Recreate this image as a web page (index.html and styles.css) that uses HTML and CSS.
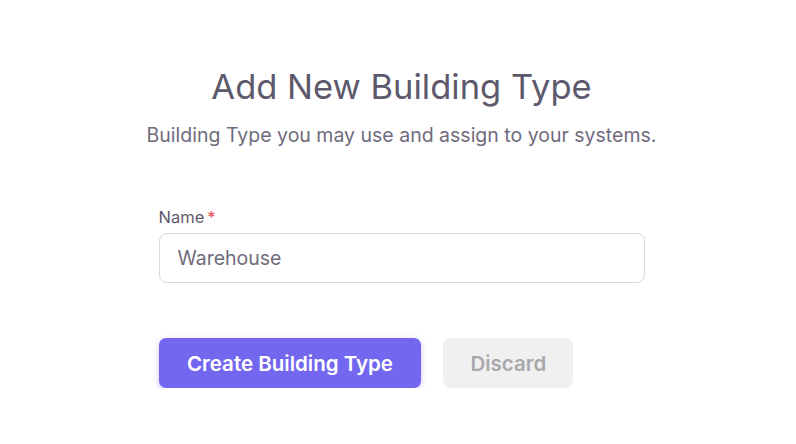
FILE: index.html
```html
<!DOCTYPE html>
<html lang="en">
<head>
<meta charset="UTF-8" />
<meta name="viewport" content="width=device-width, initial-scale=1" />
<title>Add New Building Type</title>
<link rel="stylesheet" href="styles.css">
</head>
<body>

<div class="page">
  <div class="header">
    <h1>Add New Building Type</h1>
    <p>Building Type you may use and assign to your systems.</p>
  </div>

  <form class="form">
    <label for="name">Name<span class="req">*</span></label>
    <input type="text" id="name" value="Warehouse" />

    <div class="actions">
      <button type="button" class="btn btn-primary">Create Building Type</button>
      <button type="button" class="btn btn-muted">Discard</button>
    </div>
  </form>
</div>

</body>
</html>
```

FILE: styles.css
```css
body {
  margin: 0;
  background: #fff;
  font-family: Inter, "Open Sans", sans-serif;
  color: #5d596c;
}
.page {
  padding: 62px 0 0 7px;
}
.header {
  text-align: center;
}
.header h1 {
  margin: 0;
  font-size: 34.5px;
  font-weight: 400;
  line-height: 50px;
  color: #5d596c;
}
.header p {
  margin: 10px 0 0;
  font-size: 19.5px;
  line-height: 26px;
  color: #6f6b7d;
}
.form {
  width: 486px;
  margin: 59px auto 0;
  display: flex;
  flex-direction: column;
}
.form label {
  font-size: 16.5px;
  line-height: 20px;
  color: #5d596c;
  margin-bottom: 6px;
}
.req {
  color: #ea5455;
  margin-left: 3px;
}
.form input {
  height: 50px;
  box-sizing: border-box;
  border: 1px solid #d8d6de;
  border-radius: 8px;
  padding: 0 18px;
  font-family: inherit;
  font-size: 19.5px;
  color: #6f6b7d;
  outline: none;
}
.actions {
  display: flex;
  gap: 22px;
  margin-top: 55px;
}
.btn {
  height: 50px;
  border: none;
  border-radius: 7px;
  font-family: inherit;
  font-size: 20.5px;
  font-weight: 600;
  padding: 0 28.5px;
  cursor: pointer;
}
.btn-primary {
  background: #7367f0;
  color: #fff;
  box-shadow: 0 2px 6px rgba(115, 103, 240, 0.35);
}
.btn-muted {
  background: #f0f0f0;
  color: #a8a8ac;
  padding: 0 27px;
}
```
